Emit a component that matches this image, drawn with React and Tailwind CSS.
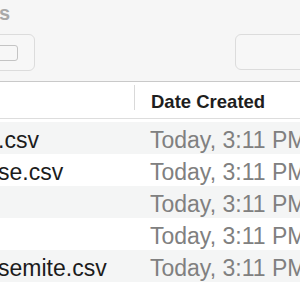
export default function App() {
  const rows = [
    { name: ".csv", date: "Today, 3:11 PM" },
    { name: "se.csv", date: "Today, 3:11 PM" },
    { name: "", date: "Today, 3:11 PM" },
    { name: "", date: "Today, 3:11 PM" },
    { name: "semite.csv", date: "Today, 3:11 PM" },
    { name: "", date: "" },
  ];
  return (
    <div
      className="w-[300px] h-[300px] overflow-hidden bg-white flex flex-col"
      style={{ fontFamily: '"Liberation Sans", Arial, sans-serif' }}
    >
      <div className="h-[82px] shrink-0 bg-[#f6f6f6] border-b border-[#c9c9c9] flex flex-col overflow-hidden">
        <div className="h-[26px] pt-[2px] text-[20px] leading-[22px] font-bold text-[#a9a9a9] -ml-[1px]">s</div>
        <div className="mt-[8px] flex items-start">
          <div className="-ml-[12px] w-[47px] h-[37px] rounded-[6px] border border-[#dcdcdc] bg-[#f7f7f7] flex items-center">
            <div className="-ml-[1px] w-[30px] h-[16px] rounded-[3px] border border-[#c4c4c4]"></div>
          </div>
          <div className="ml-auto -mr-[20px] w-[85px] h-[36px] rounded-[6px] border border-[#dcdcdc] bg-[#f7f7f7]"></div>
        </div>
      </div>
      <div className="h-[37px] shrink-0 bg-white border-b border-[#dddddd] flex">
        <div className="w-[135px] shrink-0 flex justify-end">
          <div className="w-px h-[25px] mt-[3px] bg-[#d9d9d9]"></div>
        </div>
        <div className="pl-[16px] pt-[3px] text-[18.5px] leading-[34px] font-bold text-[#1e1e1e] whitespace-nowrap">
          Date Created
        </div>
      </div>
      <div className="h-[3px] shrink-0 bg-white"></div>
      {rows.map((r, i) => (
        <div
          key={i}
          className={`h-[32px] shrink-0 flex whitespace-nowrap text-[23px] ${i % 2 === 0 ? "bg-[#f4f5f5]" : "bg-white"}`}
        >
          <div className="w-[135px] shrink-0 pt-[4px] leading-[28px] text-[#1c1c1c] -ml-[2px]">{r.name}</div>
          <div className="pl-[17px] pt-[4px] leading-[28px] text-[#808080]">{r.date}</div>
        </div>
      ))}
    </div>
  );
}
